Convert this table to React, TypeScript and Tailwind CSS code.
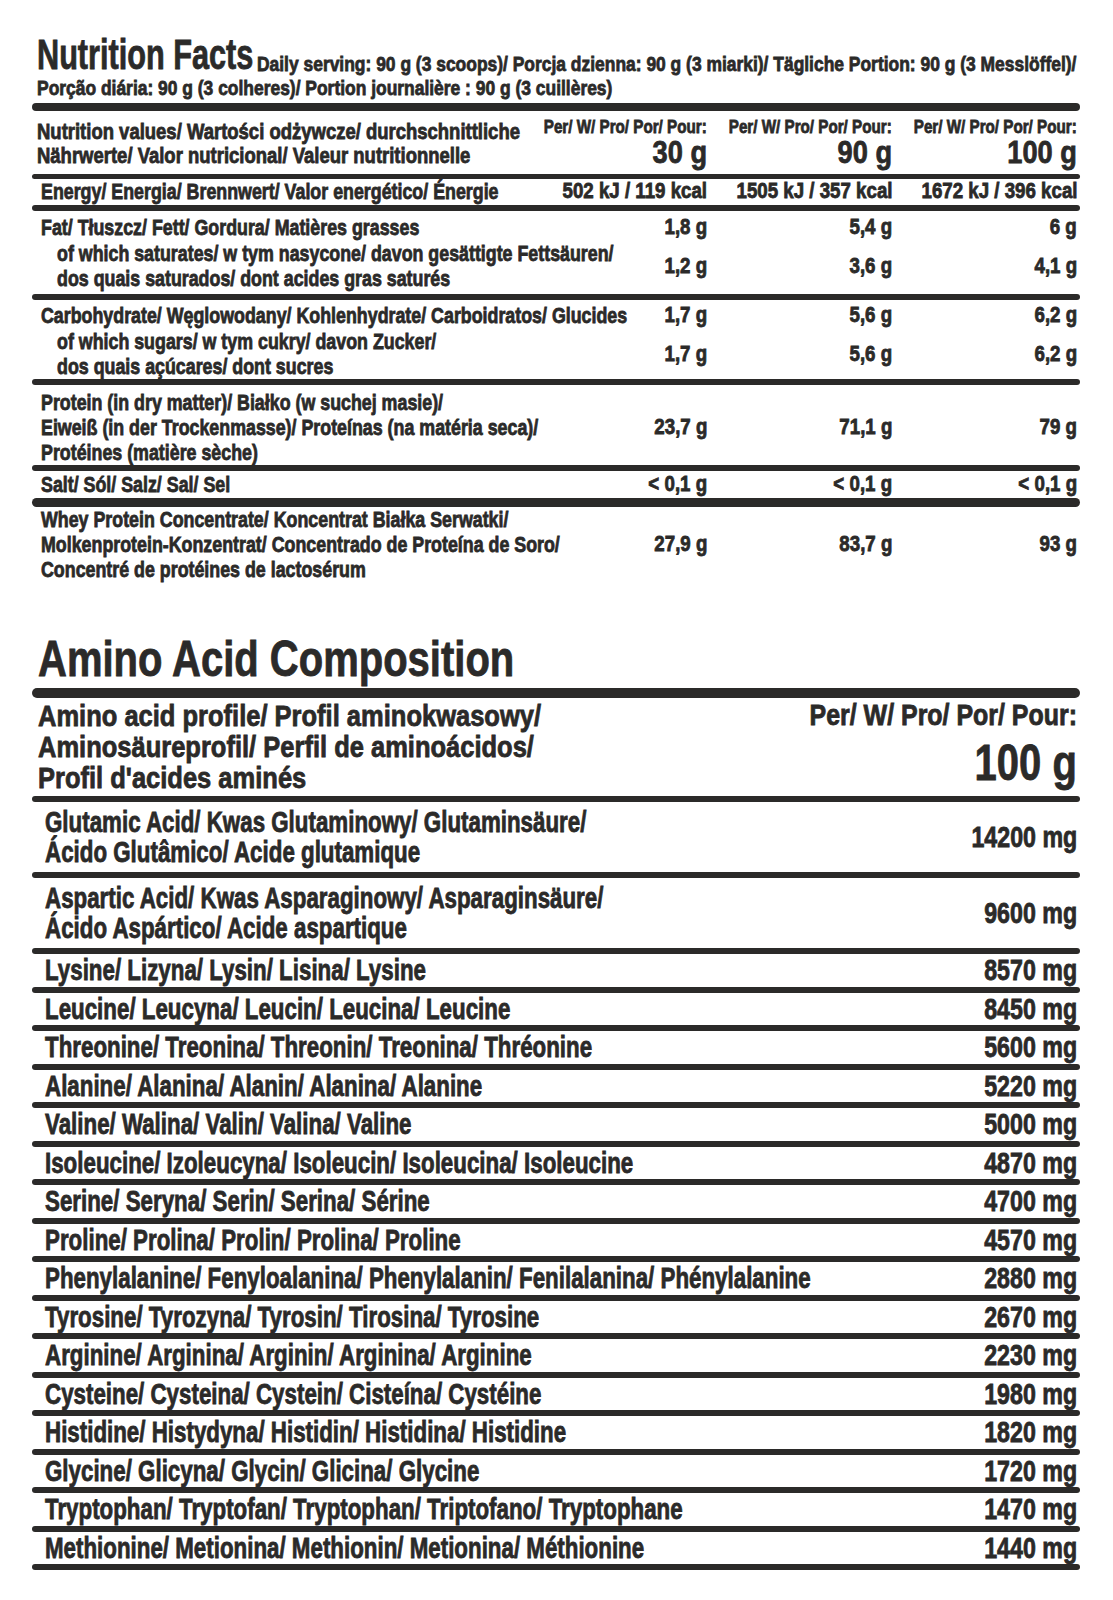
import React from "react";

type SqProps = { children: React.ReactNode; className?: string; right?: boolean; s?: string };

// condensed look: Liberation Sans Bold squeezed horizontally
function Sq({ children, className = "", right = false, s = "scale-x-[0.81]" }: SqProps) {
  return (
    <span className={`inline-block whitespace-nowrap ${right ? "origin-right" : "origin-left"} ${s} ${className}`}>
      {children}
    </span>
  );
}

function Rule({ className = "h-[6px]" }: { className?: string }) {
  return <div className={`w-full rounded-full bg-[#2b2a29] ${className}`} />;
}

const cols = "grid grid-cols-[minmax(0,1fr)_185px_185px_185px] pr-[3px]";

function NutriRow({
  label,
  values,
  sub = false,
  lh = "leading-[25px]",
}: {
  label: string[];
  values: string[];
  sub?: boolean;
  lh?: string;
}) {
  return (
    <div className={`${cols} items-center`}>
      <div className={`flex flex-col items-start ${sub ? "pl-[25px]" : "pl-[9px]"}`}>
        {label.map((l) => (
          <Sq key={l} className={`text-[22px] ${lh}`}>
            {l}
          </Sq>
        ))}
      </div>
      {values.map((v, i) => (
        <div key={i} className="text-right">
          <Sq right s="scale-x-[0.85]" className={`text-[22px] ${lh}`}>
            {v}
          </Sq>
        </div>
      ))}
    </div>
  );
}

const aminos: [string[], string][] = [
  [["Glutamic Acid/ Kwas Glutaminowy/ Glutaminsäure/", "Ácido Glutâmico/ Acide glutamique"], "14200 mg"],
  [["Aspartic Acid/ Kwas Asparaginowy/ Asparaginsäure/", "Ácido Aspártico/ Acide aspartique"], "9600 mg"],
  [["Lysine/ Lizyna/ Lysin/ Lisina/ Lysine"], "8570 mg"],
  [["Leucine/ Leucyna/ Leucin/ Leucina/ Leucine"], "8450 mg"],
  [["Threonine/ Treonina/ Threonin/ Treonina/ Thréonine"], "5600 mg"],
  [["Alanine/ Alanina/ Alanin/ Alanina/ Alanine"], "5220 mg"],
  [["Valine/ Walina/ Valin/ Valina/ Valine"], "5000 mg"],
  [["Isoleucine/ Izoleucyna/ Isoleucin/ Isoleucina/ Isoleucine"], "4870 mg"],
  [["Serine/ Seryna/ Serin/ Serina/ Sérine"], "4700 mg"],
  [["Proline/ Prolina/ Prolin/ Prolina/ Proline"], "4570 mg"],
  [["Phenylalanine/ Fenyloalanina/ Phenylalanin/ Fenilalanina/ Phénylalanine"], "2880 mg"],
  [["Tyrosine/ Tyrozyna/ Tyrosin/ Tirosina/ Tyrosine"], "2670 mg"],
  [["Arginine/ Arginina/ Arginin/ Arginina/ Arginine"], "2230 mg"],
  [["Cysteine/ Cysteina/ Cystein/ Cisteína/ Cystéine"], "1980 mg"],
  [["Histidine/ Histydyna/ Histidin/ Histidina/ Histidine"], "1820 mg"],
  [["Glycine/ Glicyna/ Glycin/ Glicina/ Glycine"], "1720 mg"],
  [["Tryptophan/ Tryptofan/ Tryptophan/ Triptofano/ Tryptophane"], "1470 mg"],
  [["Methionine/ Metionina/ Methionin/ Metionina/ Méthionine"], "1440 mg"],
];

export default function App() {
  return (
    <div className="min-h-[1600px] w-[1113px] bg-white font-['Liberation_Sans',Arial,sans-serif] font-bold text-[#2b2a29] [-webkit-text-stroke:0.8px_#2b2a29]">
      <div className="ml-[32px] w-[1048px] pt-[36px]">
        {/* Nutrition Facts header */}
        <div className="pl-[5px]">
          <div className="flex h-[40px] items-end">
            <span className="w-[220px] shrink-0">
              <Sq s="scale-x-[0.73]" className="text-[42px] leading-[40px]">
                Nutrition Facts
              </Sq>
            </span>
            <Sq s="scale-x-[0.83]" className="text-[21px] leading-[24px]">
              Daily serving: 90 g (3 scoops)/ Porcja dzienna: 90 g (3 miarki)/ Tägliche Portion: 90 g (3 Messlöffel)/
            </Sq>
          </div>
          <Sq s="scale-x-[0.83]" className="text-[21px] leading-[24px]">
            Porção diária: 90 g (3 colheres)/ Portion journalière : 90 g (3 cuillères)
          </Sq>
        </div>
        <Rule className="mt-[1px] h-[8px]" />

        <div className={`${cols} pt-[7px] pb-[6px]`}>
          <div className="flex flex-col items-start pl-[5px] pt-[2px]">
            <Sq s="scale-x-[0.84]" className="text-[22px] leading-[24px]">Nutrition values/ Wartości odżywcze/ durchschnittliche</Sq>
            <Sq s="scale-x-[0.84]" className="text-[22px] leading-[24px]">Nährwerte/ Valor nutricional/ Valeur nutritionnelle</Sq>
          </div>
          {["30 g", "90 g", "100 g"].map((v) => (
            <div key={v} className="flex flex-col items-end">
              <Sq right s="scale-x-[0.8]" className="text-[19px] leading-[18px]">
                Per/ W/ Pro/ Por/ Pour:
              </Sq>
              <Sq right s="scale-x-[0.85]" className="text-[32px] leading-[32px]">
                {v}
              </Sq>
            </div>
          ))}
        </div>
        <Rule className="h-[5px]" />

        <NutriRow
          lh="leading-[24px]"
          label={["Energy/ Energia/ Brennwert/ Valor energético/ Énergie"]}
          values={["502 kJ / 119 kcal", "1505 kJ / 357 kcal", "1672 kJ / 396 kcal"]}
        />
        <Rule className="h-[6px]" />

        <div className="pt-[3px] pb-[3px]">
          <NutriRow label={["Fat/ Tłuszcz/ Fett/ Gordura/ Matières grasses"]} values={["1,8 g", "5,4 g", "6 g"]} />
          <NutriRow
            sub
            label={["of which saturates/ w tym nasycone/ davon gesättigte Fettsäuren/", "dos quais saturados/ dont acides gras saturés"]}
            values={["1,2 g", "3,6 g", "4,1 g"]}
          />
        </div>
        <Rule className="h-[6px]" />

        <div className="pt-[2px]">
          <NutriRow
            label={["Carbohydrate/ Węglowodany/ Kohlenhydrate/ Carboidratos/ Glucides"]}
            values={["1,7 g", "5,6 g", "6,2 g"]}
          />
          <NutriRow
            sub
            label={["of which sugars/ w tym cukry/ davon Zucker/", "dos quais açúcares/ dont sucres"]}
            values={["1,7 g", "5,6 g", "6,2 g"]}
          />
        </div>
        <Rule className="h-[6px]" />

        <div className="pt-[5px]">
          <NutriRow
            label={[
              "Protein (in dry matter)/ Białko (w suchej masie)/",
              "Eiweiß (in der Trockenmasse)/ Proteínas (na matéria seca)/",
              "Protéines (matière sèche)",
            ]}
            values={["23,7 g", "71,1 g", "79 g"]}
          />
        </div>
        <Rule className="h-[6px]" />

        <NutriRow label={["Salt/ Sól/ Salz/ Sal/ Sel"]} values={["< 0,1 g", "< 0,1 g", "< 0,1 g"]} />
        <Rule className="h-[9px]" />

        <NutriRow
          label={[
            "Whey Protein Concentrate/ Koncentrat Białka Serwatki/",
            "Molkenprotein-Konzentrat/ Concentrado de Proteína de Soro/",
            "Concentré de protéines de lactosérum",
          ]}
          values={["27,9 g", "83,7 g", "93 g"]}
        />

        {/* Amino acids */}
        <div className="mt-[52px] pl-[6px]">
          <Sq s="scale-x-[0.8]" className="text-[50px] leading-[50px]">
            Amino Acid Composition
          </Sq>
        </div>
        <Rule className="mt-[4px] h-[10px]" />

        <div className="flex justify-between pt-[2px] pr-[3px]">
          <div className="flex flex-col items-start pl-[6px]">
            <Sq s="scale-x-[0.85]" className="text-[30px] leading-[31px]">Amino acid profile/ Profil aminokwasowy/</Sq>
            <Sq s="scale-x-[0.85]" className="text-[30px] leading-[31px]">Aminosäureprofil/ Perfil de aminoácidos/</Sq>
            <Sq s="scale-x-[0.85]" className="text-[30px] leading-[31px]">Profil d'acides aminés</Sq>
          </div>
          <div className="flex flex-col items-end">
            <Sq right s="scale-x-[0.86]" className="text-[29px] leading-[30px]">
              Per/ W/ Pro/ Por/ Pour:
            </Sq>
            <Sq right s="scale-x-[0.8]" className="text-[50px] leading-[66px]">
              100 g
            </Sq>
          </div>
        </div>
        <Rule className="h-[6px]" />

        {aminos.map(([label, value]) => (
          <div key={value + label[0]}>
            <div
              className={`flex items-center justify-between pr-[3px] pl-[13px] ${
                label.length > 1 ? "py-[5px]" : "h-[32.5px]"
              }`}
            >
              <div className="flex min-w-0 flex-1 flex-col items-start">
                {label.map((l) => (
                  <Sq key={l} s="scale-x-[0.77]" className="text-[29px] leading-[30px]">
                    {l}
                  </Sq>
                ))}
              </div>
              <Sq right s="scale-x-[0.8]" className="shrink-0 text-[29px] leading-[30px]">
                {value}
              </Sq>
            </div>
            <Rule className="h-[6px]" />
          </div>
        ))}
      </div>
    </div>
  );
}
